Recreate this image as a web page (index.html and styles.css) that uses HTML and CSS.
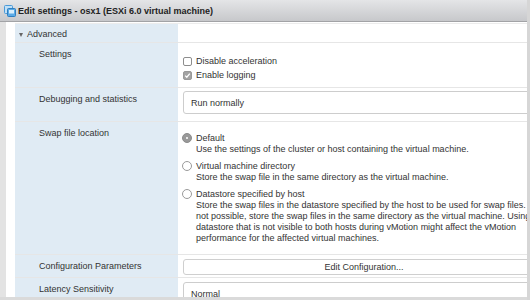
FILE: index.html
```html
<!DOCTYPE html>
<html>
<head>
<meta charset="utf-8">
<link rel="stylesheet" href="styles.css">
</head>
<body>
<div class="page">
  <div class="window">
    <div class="titlebar">
      <svg class="vm-icon" width="14" height="14" viewBox="0 0 14 14">
        <rect x="1.5" y="1.5" width="8" height="8" rx="1" fill="#bfe0f7" stroke="#4a9ad8" stroke-width="1"/>
        <rect x="4.5" y="4.5" width="8" height="8" rx="1" fill="#5aaae6" stroke="#2f7fc0" stroke-width="1"/>
        <rect x="6" y="6" width="5" height="3.5" fill="#d8eefc"/>
      </svg>
      <span class="title">Edit settings - osx1 (ESXi 6.0 virtual machine)</span>
    </div>
    <div class="content">
      <div class="grid">
        <div class="cell label head"><span class="caret"></span>Advanced</div>
        <div class="cell value head"></div>

        <div class="cell label r-settings">Settings</div>
        <div class="cell value r-settings">
          <div class="checks">
            <label class="check"><span class="box"></span>Disable acceleration</label>
            <label class="check"><span class="box on">
              <svg width="9" height="9" viewBox="0 0 9 9"><path d="M2.2 4.6 L3.8 6.2 L6.8 2.6" fill="none" stroke="#fff" stroke-width="1.3"/></svg>
            </span>Enable logging</label>
          </div>
        </div>

        <div class="cell label r-debug">Debugging and statistics</div>
        <div class="cell value r-debug">
          <div class="select">Run normally</div>
        </div>

        <div class="cell label r-swap">Swap file location</div>
        <div class="cell value r-swap">
          <div class="radios">
            <div class="radio">
              <span class="dot on"></span>
              <div class="rtext">
                <div>Default</div>
                <div>Use the settings of the cluster or host containing the virtual machine.</div>
              </div>
            </div>
            <div class="radio">
              <span class="dot"></span>
              <div class="rtext">
                <div>Virtual machine directory</div>
                <div>Store the swap file in the same directory as the virtual machine.</div>
              </div>
            </div>
            <div class="radio">
              <span class="dot"></span>
              <div class="rtext">
                <div>Datastore specified by host</div>
                <div>Store the swap files in the datastore specified by the host to be used for swap files. If that is not possible, store the swap files in the same directory as the virtual machine. Using a datastore that is not visible to both hosts during vMotion might affect the vMotion performance for the affected virtual machines.</div>
              </div>
            </div>
          </div>
        </div>

        <div class="cell label r-config">Configuration Parameters</div>
        <div class="cell value r-config">
          <div class="button">Edit Configuration...</div>
        </div>

        <div class="cell label r-latency">Latency Sensitivity</div>
        <div class="cell value r-latency">
          <div class="select">Normal</div>
        </div>
      </div>
    </div>
  </div>
  <div class="vstrip"></div>
</div>
</body>
</html>
```

FILE: styles.css
```css
* { box-sizing: border-box; }
html, body { margin: 0; padding: 0; }
body {
  font-family: "Liberation Sans", Arial, sans-serif;
  font-size: 9px;
  color: #333;
  background: #dcdcdc;
}
.page {
  width: 530px;
  height: 300px;
  display: flex;
  overflow: hidden;
  background: #dadada;
}
.window {
  width: 527px;
  height: 297px;
  display: flex;
  flex-direction: column;
  overflow: hidden;
  background: #e3e3e3;
}
.vstrip {
  width: 3px;
  background: #d6d6d6;
}
.titlebar {
  height: 22px;
  flex: none;
  display: flex;
  align-items: center;
  padding-left: 3px;
  background: linear-gradient(#e4e5e7, #c7c8cb);
  border-bottom: 1px solid #a2a3a6;
}
.vm-icon { margin-right: 1px; flex: none; }
.title {
  font-weight: bold;
  color: #222;
  font-size: 9px;
}
.content {
  flex: 1;
  margin-left: 6px;
  background: #fff;
  padding: 1px 0 0 9px;
  overflow: hidden;
}
.grid {
  width: 540px;
  display: grid;
  grid-template-columns: 163px minmax(0, 1fr);
  border-top: 1px solid #ececec;
}
.cell {
  border-bottom: 1px solid #e6e6e6;
  min-width: 0;
}
.label {
  background: #e0ebf4;
  padding: 6px 0 0 24px;
  line-height: 11px;
}
.value {
  padding: 0 10px 0 5px;
}
.head {
  height: 19px;
  padding-top: 5px;
}
.label.head {
  padding-left: 3px;
  display: flex;
  align-items: flex-start;
}
.caret {
  display: inline-block;
  width: 0;
  height: 0;
  border-left: 2.5px solid transparent;
  border-right: 2.5px solid transparent;
  border-top: 4px solid #666;
  margin: 4px 4px 0 1px;
}
.r-settings { height: 45px; }
.value.r-settings { padding-top: 13px; }
.checks { display: flex; flex-direction: column; gap: 3px; }
.check {
  display: flex;
  align-items: center;
  line-height: 11px;
}
.box {
  width: 9px;
  height: 9px;
  border: 1px solid #8d8d8d;
  border-radius: 2px;
  background: #fff;
  margin-right: 4px;
  display: flex;
}
.box.on {
  background: #a3a3a3;
  border-color: #999;
}
.box.on svg { margin: -1px; }
.r-debug { height: 34px; }
.value.r-debug { padding-top: 3px; }
.select {
  height: 23px;
  border: 1px solid #cdcdcd;
  border-radius: 3px;
  background: #fff;
  padding-left: 7px;
  display: flex;
  align-items: center;
}
.r-swap { height: 133px; }
.value.r-swap { padding-top: 11px; }
.radios { display: flex; flex-direction: column; gap: 6px; }
.radio { display: flex; align-items: flex-start; }
.dot {
  width: 10px;
  height: 10px;
  border: 1px solid #9a9a9a;
  border-radius: 50%;
  background: #fff;
  margin: 0 4px 0 -1px;
  flex: none;
  position: relative;
}
.dot.on {
  background: #999;
  border-color: #8c8c8c;
}
.dot.on::after {
  content: "";
  position: absolute;
  left: 3px;
  top: 3px;
  width: 2px;
  height: 2px;
  border-radius: 50%;
  background: #fff;
}
.rtext {
  line-height: 11px;
  width: 365px;
  flex: none;
}
.r-config { height: 23px; }
.value.r-config { padding-top: 4px; }
.button {
  height: 16px;
  border: 1px solid #cfcfcf;
  border-radius: 3px;
  background: #fff;
  display: flex;
  align-items: center;
  justify-content: center;
}
.r-latency { height: 30px; }
.value.r-latency { padding-top: 4px; }
```
